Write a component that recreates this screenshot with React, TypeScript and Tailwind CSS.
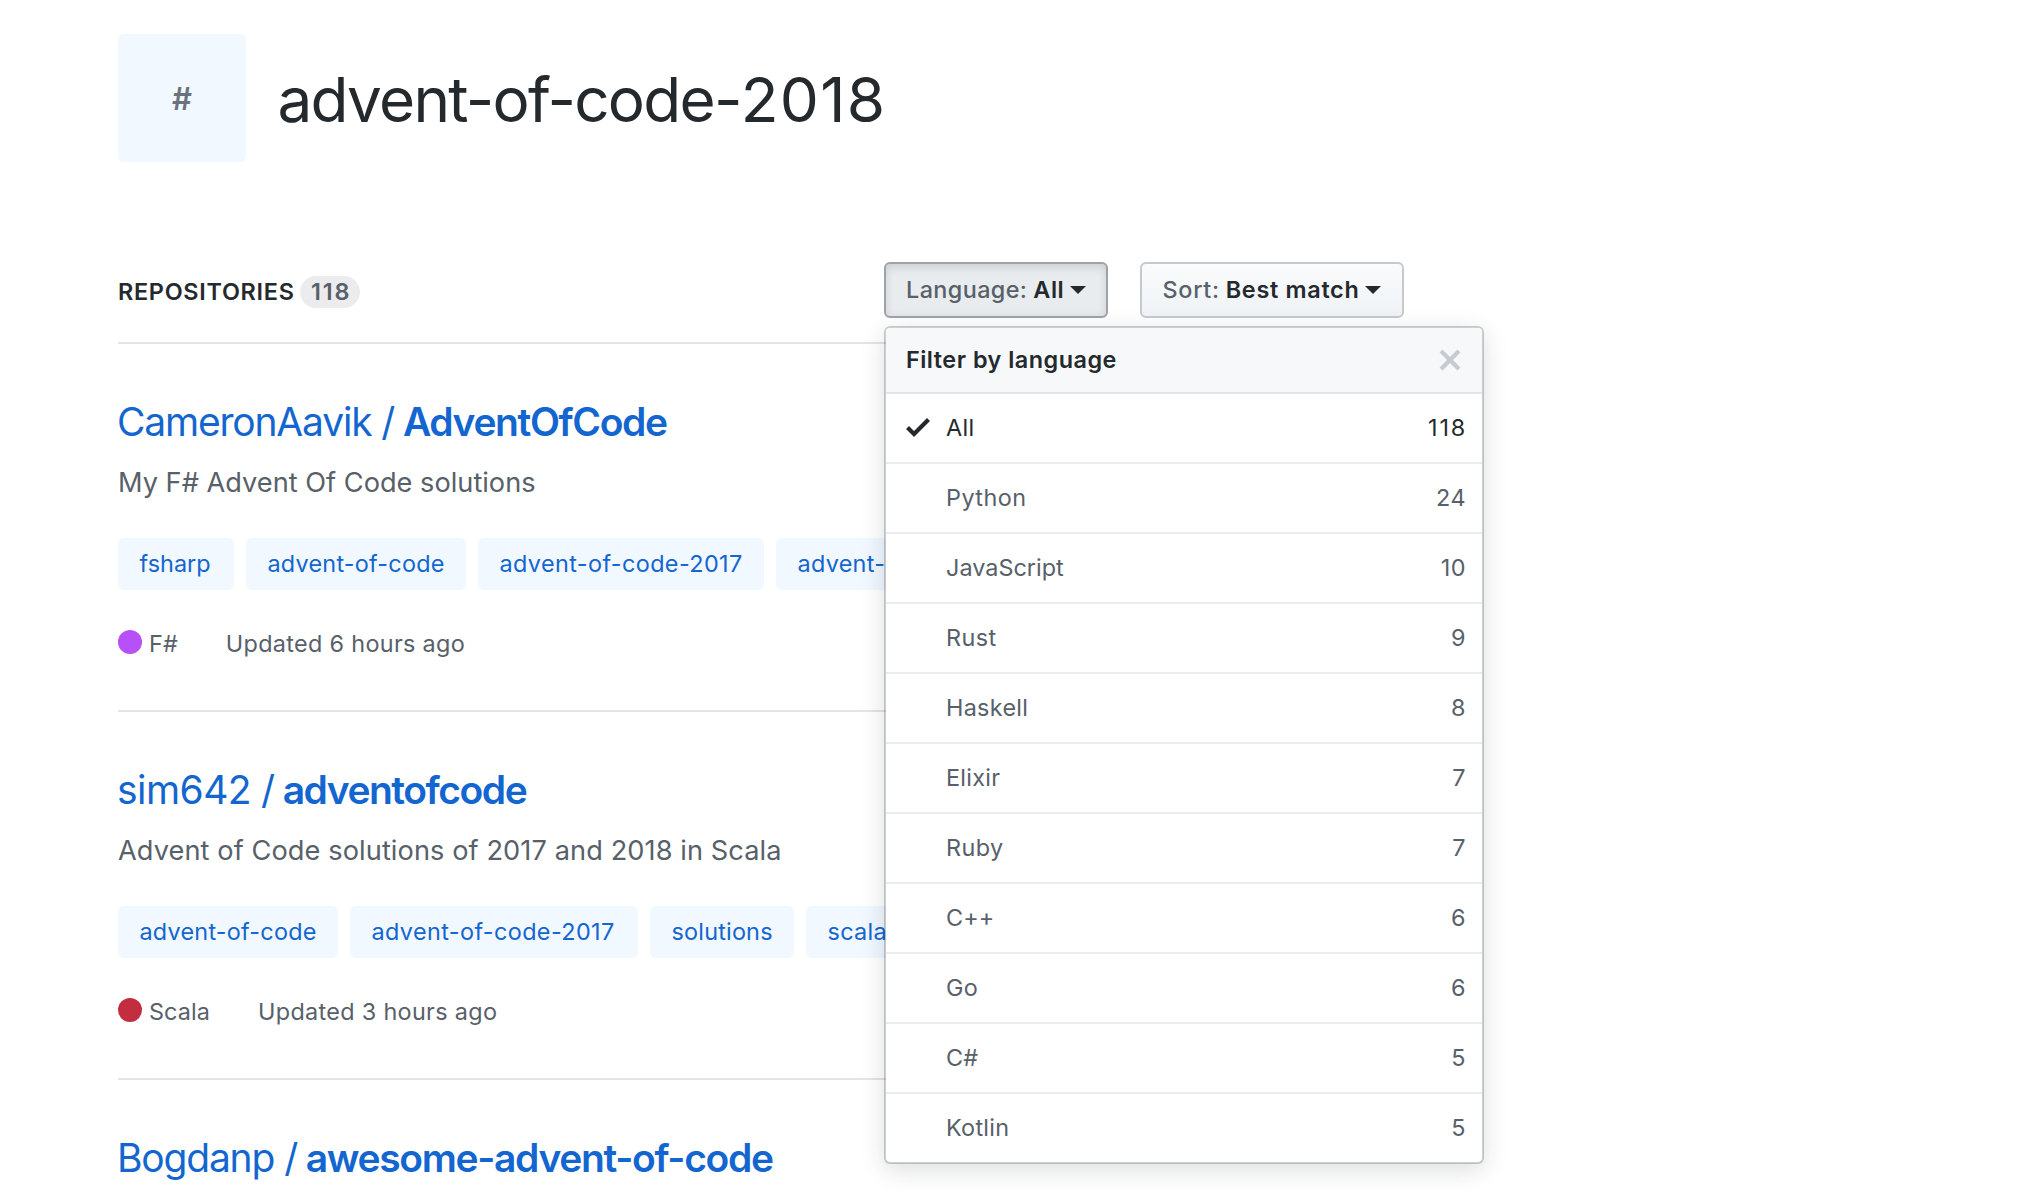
type Repo = {
  owner: string;
  ownerTracking: string;
  name: string;
  nameTracking: string;
  description?: string;
  descriptionTracking?: string;
  topics?: [string, string][];
  language?: string;
  languageColor?: string;
  updated?: string;
};

const repos: Repo[] = [
  {
    owner: "CameronAavik",
    ownerTracking: "tracking-[-1.2px]",
    name: "AdventOfCode",
    nameTracking: "tracking-[-1.38px]",
    description: "My F# Advent Of Code solutions",
    descriptionTracking: "tracking-[0]",
    topics: [
      ["fsharp", "w-[116px] tracking-[0.04px]"],
      ["advent-of-code", "w-[220px] tracking-[0.24px]"],
      ["advent-of-code-2017", "w-[286px] tracking-[0.4px]"],
      ["advent-", "w-[112px] tracking-[0.3px]"],
    ],
    language: "F#",
    languageColor: "bg-[#b750f7]",
    updated: "Updated 6 hours ago",
  },
  {
    owner: "sim642",
    ownerTracking: "tracking-[-0.55px]",
    name: "adventofcode",
    nameTracking: "tracking-[-1.48px]",
    description: "Advent of Code solutions of 2017 and 2018 in Scala",
    descriptionTracking: "tracking-[0.08px]",
    topics: [
      ["advent-of-code", "w-[220px] tracking-[0.24px]"],
      ["advent-of-code-2017", "w-[288px] tracking-[0.4px]"],
      ["solutions", "w-[144px] tracking-[0.2px]"],
      ["scala", "w-[102px] tracking-[0.3px]"],
    ],
    language: "Scala",
    languageColor: "bg-[#c22d40]",
    updated: "Updated 3 hours ago",
  },
  {
    owner: "Bogdanp",
    ownerTracking: "tracking-[-1.2px]",
    name: "awesome-advent-of-code",
    nameTracking: "tracking-[-1.34px]",
  },
];

const languages: [string, string, string][] = [
  ["All", "118", "tracking-[0.4px]"],
  ["Python", "24", "tracking-[0.45px]"],
  ["JavaScript", "10", "tracking-[0.03px]"],
  ["Rust", "9", "tracking-[0.4px]"],
  ["Haskell", "8", "tracking-[0.3px]"],
  ["Elixir", "7", "tracking-[0.3px]"],
  ["Ruby", "7", "tracking-[0.4px]"],
  ["C++", "6", "tracking-[0.1px]"],
  ["Go", "6", "tracking-[0.2px]"],
  ["C#", "5", "tracking-[0.2px]"],
  ["Kotlin", "5", "tracking-[0.3px]"],
];

function Caret() {
  return (
    <span className="ml-[6px] h-0 w-0 border-x-8 border-t-8 border-x-transparent border-t-[#24292e]" />
  );
}

function LanguageMenu() {
  return (
    <div className="absolute top-[64px] left-0 z-10 w-[600px] overflow-hidden rounded-[6px] border-2 border-[rgba(27,31,35,0.22)] bg-white bg-clip-padding shadow-[0_6px_24px_rgba(27,31,35,0.15)]">
      <div className="flex h-[66px] items-center justify-between border-b-2 border-[#e1e4e8] bg-[#f6f8fa] pr-5 pl-5">
        <span className="text-[23.4px] leading-9 font-semibold tracking-[0.5px] text-[#24292e]">
          Filter by language
        </span>
        <svg viewBox="0 0 12 16" className="h-8 w-6" fill="#c6cbd1">
          <path
            fillRule="evenodd"
            d="M7.48 8l3.75 3.75-1.48 1.48L6 9.48l-3.75 3.75-1.48-1.48L4.52 8 .77 4.25l1.48-1.48L6 6.52l3.75-3.75 1.48 1.48L7.48 8z"
          />
        </svg>
      </div>
      {languages.map(([name, count, tracking], i) => (
        <div
          key={name}
          className={
            "flex h-[70px] items-center border-b-2 border-[#eaecef] pr-4 pl-5 text-[23.4px] last:h-[68px] last:border-b-0 " +
            (i === 0 ? "text-[#24292e]" : "text-[#586069]")
          }
        >
          <span className="flex w-10 items-center">
            {i === 0 && (
              <svg viewBox="0 0 12 16" className="mb-[3px] h-8 w-6" fill="#24292e">
                <path fillRule="evenodd" d="M12 5l-8 8-4-4 1.5-1.5L4 10l6.5-6.5L12 5z" />
              </svg>
            )}
          </span>
          <span className={"flex-1 " + tracking}>{name}</span>
          <span className={count === "118" ? "-mr-px tracking-[1.8px]" : "tracking-[0.5px]"}>{count}</span>
        </div>
      ))}
    </div>
  );
}

function RepoItem({ repo }: { repo: Repo }) {
  return (
    <article className="h-[368px] shrink-0 border-b-2 border-[#e1e4e8] pt-12">
      <h3 className="-ml-px flex h-[60px] items-center text-[39px] leading-[60px] text-[#1366cf]">
        <span className={repo.ownerTracking}>{repo.owner}</span>
        <span className="ml-[10px]">/</span>
        <span className={"ml-[7.5px] font-semibold " + repo.nameTracking}>{repo.name}</span>
      </h3>
      {repo.description && (
        <p className={"mt-[10px] text-[27.2px] leading-[42px] text-[#586069] " + repo.descriptionTracking}>
          {repo.description}
        </p>
      )}
      {repo.topics && (
        <div className="mt-[34px] flex gap-3">
          {repo.topics.map(([topic, look]) => (
            <span
              key={topic}
              className={
                "h-[52px] shrink-0 rounded-[6px] bg-[#f1f8ff] pl-[21.5px] text-[23.4px] leading-[51px] whitespace-nowrap text-[#1366cf] " +
                look
              }
            >
              {topic}
            </span>
          ))}
        </div>
      )}
      {repo.language && (
        <div className="mt-[36px] flex items-center text-[23.4px] leading-9 text-[#586069]">
          <span className={"mb-1 h-6 w-6 rounded-full " + repo.languageColor} />
          <span className="ml-[7px] tracking-[0.1px]">{repo.language}</span>
          <span className="ml-[48px] tracking-[0.32px]">{repo.updated}</span>
        </div>
      )}
    </article>
  );
}

export default function App() {
  return (
    <main className="h-[1202px] w-[2026px] overflow-hidden bg-white pt-[34px] pl-[118px] font-['Inter',sans-serif] text-[#24292e]">
      <header className="flex h-32 items-center">
        <div className="flex h-32 w-32 items-center justify-center rounded-[6px] bg-[#f1f8ff] pt-[2px] text-[31px] font-semibold text-[#6a737d]">
          #
        </div>
        <h1 className="ml-[31.5px] pt-1 text-[62px] leading-[80px] tracking-[-1.73px]">
          advent-of-code-<span className="tracking-[1.3px]">2018</span>
        </h1>
      </header>

      <div className="mt-[100px] flex h-[82px] w-[1286px] items-start justify-between border-b-2 border-[#e1e4e8]">
        <h2 className="mt-[14px] flex h-8 items-center text-[23.4px] font-semibold">
          <span className="tracking-[0.72px]">REPOSITORIES</span>
          <span className="ml-[5px] flex h-8 w-[60px] items-center justify-center rounded-full bg-[#ececee] pl-[3px] tracking-[1.8px] text-[#586069]">
            118
          </span>
        </h2>
        <div className="flex gap-8 text-[23.4px]">
          <div className="relative">
            <button className="flex h-14 w-56 items-center rounded-[6px] border-2 border-[#9fa3a7] bg-[#e9ecef] pl-5 shadow-[inset_0_3px_8px_rgba(27,31,35,0.15)]">
              <span className="font-medium tracking-[0.4px] text-[#586069]">Language:</span>
              <span className="ml-[6px] font-semibold tracking-[0.5px]">All</span>
              <Caret />
            </button>
            <LanguageMenu />
          </div>
          <button className="flex h-14 w-[264px] items-center rounded-[6px] border-2 border-[#c6c9cd] bg-linear-to-b from-[#fafbfc] to-[#eff3f6] pl-[20.5px]">
            <span className="font-medium tracking-[0.7px] text-[#586069]">Sort:</span>
            <span className="ml-[6px] font-semibold tracking-[0.7px]">Best match</span>
            <Caret />
          </button>
        </div>
      </div>

      <section className="flex w-[1286px] flex-col">
        {repos.map((repo) => (
          <RepoItem key={repo.name} repo={repo} />
        ))}
      </section>
    </main>
  );
}
